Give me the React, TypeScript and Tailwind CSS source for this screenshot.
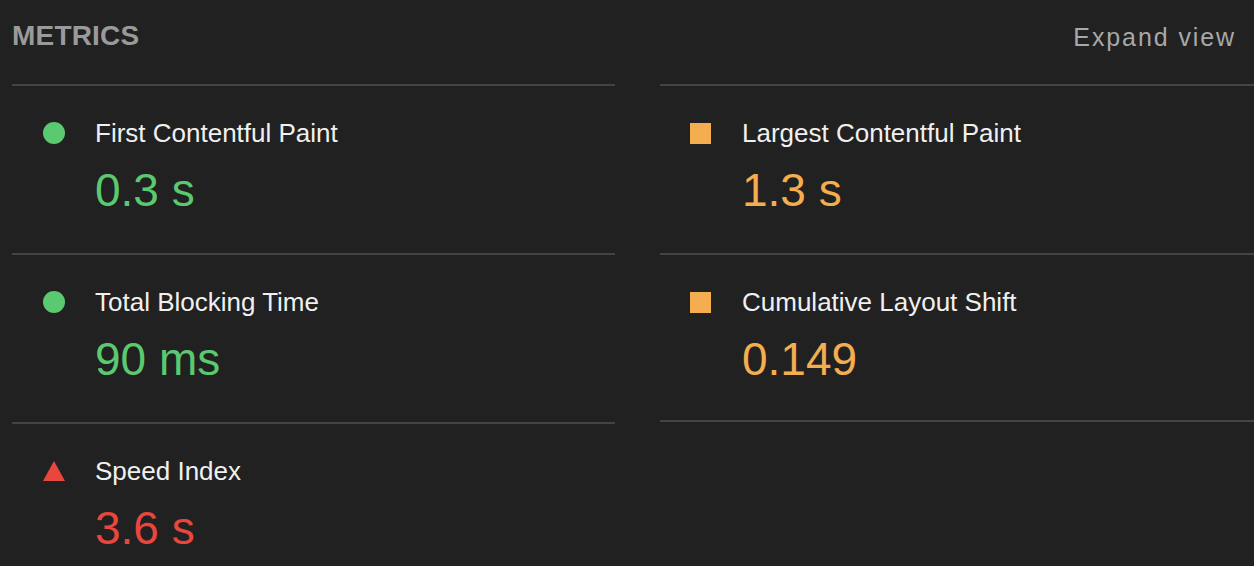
import React from "react";

type Kind = "pass" | "average" | "fail";

const colors: Record<Kind, string> = {
  pass: "text-[#5bc970]",
  average: "text-[#f4ad4f]",
  fail: "text-[#e9463d]",
};

function Icon({ kind }: { kind: Kind }) {
  if (kind === "pass") return <div className="w-[22px] h-[22px] rounded-full bg-[#5bc970]" />;
  if (kind === "average") return <div className="w-[21px] h-[21px] bg-[#f4ad4f]" />;
  return (
    <svg width="22" height="22" viewBox="0 0 22 22">
      <polygon points="11,1 22,21 0,21" fill="#e9463d" />
    </svg>
  );
}

function Metric({ kind, title, value, h, pad }: { kind: Kind; title: string; value: string; h: string; pad: string }) {
  return (
    <div className={`border-t-2 border-[#444444] ${h} pt-[32px] flex flex-col`}>
      <div className="flex items-center h-[30px]">
        <div className={`${pad} shrink-0`} />
        <div className="w-[52px] shrink-0 flex items-center">
          <Icon kind={kind} />
        </div>
        <div className="text-[26px] leading-[30px] text-[#f0f0f0]">{title}</div>
      </div>
      <div className={`mt-[16px] ${pad === "w-[31px]" ? "pl-[83px]" : "pl-[82px]"} text-[46px] leading-[52px] ${colors[kind]}`}>{value}</div>
    </div>
  );
}

export default function App() {
  return (
    <div
      className="w-[1254px] h-[566px] bg-[#212121] overflow-hidden"
      style={{ fontFamily: '"Liberation Sans", Arial, sans-serif' }}
    >
      <div className="h-[84px] flex items-start justify-between pl-[12px] pr-[18px] pt-[19px]">
        <div className="text-[28px] leading-[34px] font-bold tracking-[0.2px] text-[#9a9a9a]">METRICS</div>
        <div className="text-[25px] leading-[34px] tracking-[1.9px] text-[#a8a8a8] pt-[1px]">Expand view</div>
      </div>
      <div className="flex pl-[12px] gap-[45px]">
        <div className="w-[603px] flex flex-col">
          <Metric kind="pass" title="First Contentful Paint" value="0.3 s" h="h-[169px]" pad="w-[31px]" />
          <Metric kind="pass" title="Total Blocking Time" value="90 ms" h="h-[169px]" pad="w-[31px]" />
          <Metric kind="fail" title="Speed Index" value="3.6 s" h="h-[169px]" pad="w-[31px]" />
        </div>
        <div className="flex-1 flex flex-col">
          <Metric kind="average" title="Largest Contentful Paint" value="1.3 s" h="h-[169px]" pad="w-[30px]" />
          <Metric kind="average" title="Cumulative Layout Shift" value="0.149" h="h-[167px]" pad="w-[30px]" />
          <div className="border-t-2 border-[#444444]" />
        </div>
      </div>
    </div>
  );
}
